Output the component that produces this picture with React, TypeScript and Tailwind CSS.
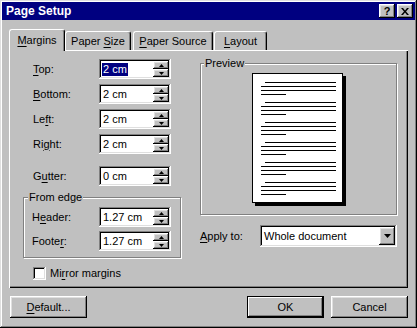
import React from "react";

const raised =
  "shadow-[inset_-1px_-1px_0_#000,inset_1px_1px_0_#fff,inset_-2px_-2px_0_#808080,inset_2px_2px_0_#dfdfdf]";
const sunken =
  "shadow-[inset_-1px_-1px_0_#fff,inset_1px_1px_0_#808080,inset_-2px_-2px_0_#dfdfdf,inset_2px_2px_0_#000]";

function U({ children }: { children: React.ReactNode }) {
  return <span className="underline underline-offset-[2px]">{children}</span>;
}

function Arrow({ up }: { up?: boolean }) {
  return (
    <svg width="5" height="3" viewBox="0 0 5 3" className="block">
      {up ? <path d="M2.5 0L5 3H0z" fill="#000" /> : <path d="M0 0h5L2.5 3z" fill="#000" />}
    </svg>
  );
}

function Spin({ value, focused }: { value: string; focused?: boolean }) {
  return (
    <div className={`flex h-[20px] w-[72px] bg-white p-[2px] ${sunken}`}>
      <div className="flex flex-1 items-center pl-[1px]">
        {focused ? <span className="bg-[#000080] px-[1px] leading-[13px] text-white">{value}</span> : <span className="pl-[1px]">{value}</span>}
      </div>
      <div className="flex w-[16px] flex-col">
        <div className={`flex h-[8px] items-center justify-center bg-[#c0c0c0] ${raised}`}>
          <Arrow up />
        </div>
        <div className={`flex h-[8px] items-center justify-center bg-[#c0c0c0] ${raised}`}>
          <Arrow />
        </div>
      </div>
    </div>
  );
}

function Row({ label, value, focused, className = "" }: { label: React.ReactNode; value: string; focused?: boolean; className?: string }) {
  return (
    <div className={`flex items-center pl-[10px] ${className}`}>
      <span className="w-[66px]">{label}</span>
      <Spin value={value} focused={focused} />
    </div>
  );
}

function Button({ children, className = "", def }: { children: React.ReactNode; className?: string; def?: boolean }) {
  return (
    <div
      className={`flex h-[22px] w-[77px] items-center justify-center bg-[#c0c0c0] ${
        def
          ? "shadow-[inset_0_0_0_1px_#000,inset_-2px_-2px_0_#000,inset_2px_2px_0_#fff,inset_-3px_-3px_0_#808080]"
          : raised
      } ${className}`}
    >
      {children}
    </div>
  );
}

function PageLines() {
  return (
    <div className="flex flex-col gap-[7px] pl-[8px] pt-[8px]">
      {[0, 1, 2, 3, 4, 5].map((i) => (
        <div key={i} className="flex flex-col gap-[3px]">
          <div className="ml-[4px] h-px w-[71px] bg-black" />
          <div className="h-px w-[75px] bg-black" />
          <div className="h-px w-[75px] bg-black" />
          <div className="h-px w-[25px] bg-black" />
        </div>
      ))}
    </div>
  );
}

export default function App() {
  return (
    <div
      className="h-[328px] w-[417px] bg-[#c0c0c0] p-[2px] text-[11px] leading-[13px] text-black shadow-[inset_-1px_-1px_0_#000,inset_1px_1px_0_#dfdfdf,inset_-2px_-2px_0_#808080,inset_2px_2px_0_#fff]"
      style={{ fontFamily: '"Liberation Sans", Arial, sans-serif' }}
    >
      {/* Title bar */}
      <div className="flex h-[18px] items-center justify-between bg-[#000080] pl-[4px] pr-[2px]">
        <span className="text-[12px] font-bold text-white">Page Setup</span>
        <div className="flex gap-[2px]">
          <div className={`flex h-[14px] w-[16px] items-center justify-center bg-[#c0c0c0] text-[11px] font-bold ${raised}`}>?</div>
          <div className={`flex h-[14px] w-[16px] items-center justify-center bg-[#c0c0c0] ${raised}`}>
            <svg width="8" height="7" viewBox="0 0 8 7">
              <path d="M0 0h2l2 2.5L6 0h2L5 3.5 8 7H6L4 4.5 2 7H0l3-3.5z" fill="#000" />
            </svg>
          </div>
        </div>
      </div>

      <div className="px-[7px]">
        {/* Tabs */}
        <div className="mt-[9px] flex items-end">
          <div className="relative z-10 -mb-px flex h-[22px] w-[56px] items-start justify-center rounded-t-[3px] border-l border-t border-r border-l-white border-t-white border-r-black bg-[#c0c0c0] pt-[4px] shadow-[inset_-1px_0_0_#808080]">
            <span><U>M</U>argins</span>
          </div>
          <div className="flex h-[19px] w-[66px] items-start justify-center rounded-t-[3px] border-l border-t border-r border-l-white border-t-white border-r-black pt-[3px] shadow-[inset_-1px_0_0_#808080]">
            <span>Paper <U>S</U>ize</span>
          </div>
          <div className="ml-[2px] flex h-[19px] w-[80px] items-start justify-center rounded-t-[3px] border-l border-t border-r border-l-white border-t-white border-r-black pt-[3px] shadow-[inset_-1px_0_0_#808080]">
            <span><U>P</U>aper Source</span>
          </div>
          <div className="ml-[1px] flex h-[19px] w-[53px] items-start justify-center rounded-t-[3px] border-l border-t border-r border-l-white border-t-white border-r-black pt-[3px] shadow-[inset_-1px_0_0_#808080]">
            <span><U>L</U>ayout</span>
          </div>
        </div>

        {/* Panel */}
        <div className="flex h-[238px] gap-[19px] pl-[14px] pt-[7px] shadow-[inset_1px_1px_0_#fff,inset_-1px_-1px_0_#000,inset_-2px_-2px_0_#808080]">
          {/* Left column */}
          <div className="flex w-[158px] flex-col pt-[2px]">
            <Row label={<><U>T</U>op:</>} value="2 cm" focused />
            <Row className="mt-[5px]" label={<><U>B</U>ottom:</>} value="2 cm" />
            <Row className="mt-[5px]" label={<>Le<U>f</U>t:</>} value="2 cm" />
            <Row className="mt-[5px]" label={<>Ri<U>g</U>ht:</>} value="2 cm" />
            <Row className="mt-[12px]" label={<>G<U>u</U>tter:</>} value="0 cm" />

            <fieldset className="mt-[5px] border border-[#808080] pb-[6px] pl-[8px] shadow-[inset_1px_1px_0_#fff,1px_1px_0_#fff]">
              <legend className="ml-[-4px] bg-[#c0c0c0] px-[1px]">From edge</legend>
              <div className="mt-[3px] flex items-center">
                <span className="w-[67px]">H<U>e</U>ader:</span>
                <Spin value="1.27 cm" />
              </div>
              <div className="mt-[4px] flex items-center">
                <span className="w-[67px]">Foote<U>r</U>:</span>
                <Spin value="1.27 cm" />
              </div>
            </fieldset>

            <div className="mt-[9px] flex items-center gap-[4px] pl-[10px]">
              <div className={`h-[13px] w-[13px] bg-white ${sunken}`} />
              <span>Mi<U>r</U>ror margins</span>
            </div>
          </div>

          {/* Right column */}
          <div className="flex w-[197px] flex-col">
            <fieldset className="border border-[#808080] pb-[11px] shadow-[inset_1px_1px_0_#fff,1px_1px_0_#fff]">
              <legend className="ml-[3px] bg-[#c0c0c0] px-[1px]">Preview</legend>
              <div className="ml-[51px] mt-[3px] h-[130px] w-[91px] border border-black bg-white shadow-[3px_3px_0_#000]">
                <PageLines />
              </div>
            </fieldset>

            <div className="mt-[10px] flex items-center">
              <span className="w-[60px]"><U>A</U>pply to:</span>
              <div className={`flex h-[22px] w-[137px] items-center bg-white p-[2px] ${sunken}`}>
                <span className="flex-1 pl-[2px]">Whole document</span>
                <div className={`flex h-[18px] w-[16px] items-center justify-center bg-[#c0c0c0] ${raised}`}>
                  <svg width="7" height="4" viewBox="0 0 7 4">
                    <path d="M0 0h7L3.5 4z" fill="#000" />
                  </svg>
                </div>
              </div>
            </div>
          </div>
        </div>

        {/* Buttons */}
        <div className="mt-[8px] flex items-center">
          <Button className="ml-[1px]"><span><U>D</U>efault...</span></Button>
          <div className="flex-1" />
          <Button def>OK</Button>
          <Button className="ml-[7px]">Cancel</Button>
        </div>
      </div>
    </div>
  );
}
